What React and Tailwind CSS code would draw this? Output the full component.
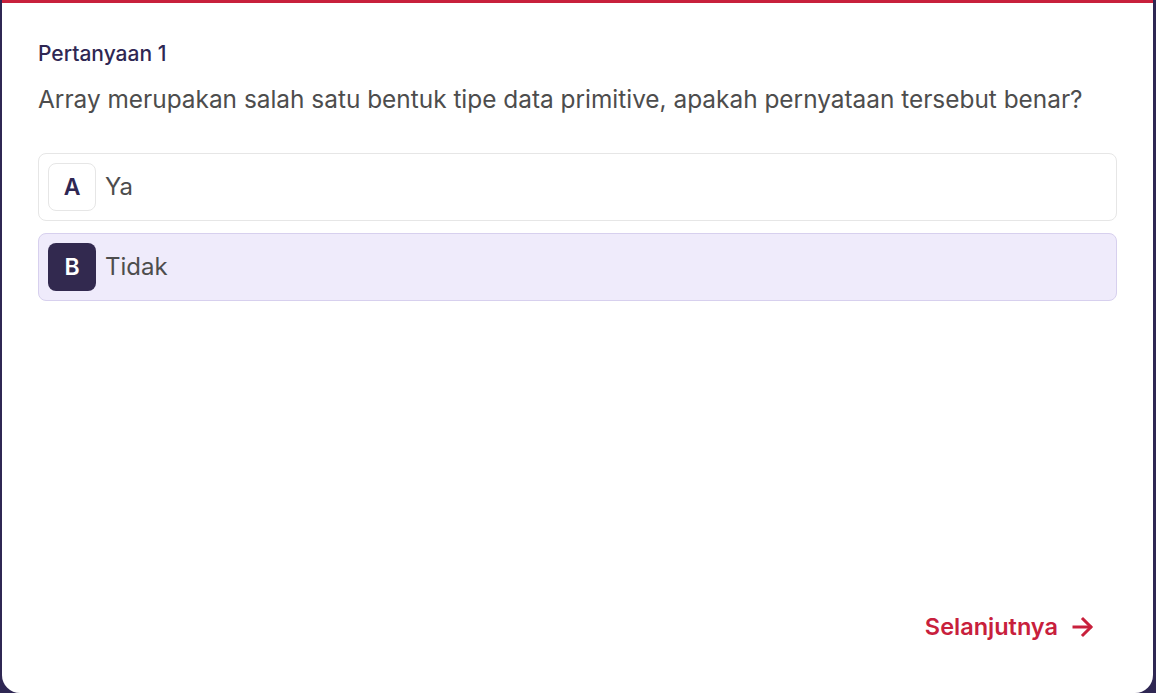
import { useState } from "react";

const options = [
  { key: "A", label: "Ya" },
  { key: "B", label: "Tidak" },
];

export default function App() {
  const [selected, setSelected] = useState("B");

  return (
    <div
      className="w-full h-[693px] bg-[#2f2753] pl-[2px] pr-[3px]"
      style={{ fontFamily: "Inter, 'Noto Sans', sans-serif" }}
    >
      <div className="h-full bg-white border-t-[3px] border-[#c8203c] rounded-b-[18px] flex flex-col px-9 pt-[37px] pb-[50px]">
        {/* Question */}
        <p className="text-[21px] leading-7 font-medium text-[#2f2753]">
          Pertanyaan 1
        </p>
        <p className="mt-[15px] text-[24.4px] leading-8 text-[#4d4d4d]">
          Array merupakan salah satu bentuk tipe data primitive, apakah pernyataan tersebut benar?
        </p>

        {/* Options */}
        <div className="mt-[38px] flex flex-col gap-[12px]">
          {options.map((opt) => {
            const active = selected === opt.key;
            return (
              <button
                key={opt.key}
                onClick={() => setSelected(opt.key)}
                className={`flex items-center gap-[9px] p-[9px] rounded-lg border text-left cursor-pointer ${
                  active
                    ? "bg-[#efebfb] border-[#d7d0ee]"
                    : "bg-white border-[#e6e6e6]"
                }`}
              >
                <span
                  className={`w-12 h-12 flex items-center justify-center rounded-lg text-[23px] font-semibold ${
                    active
                      ? "bg-[#32294f] text-white"
                      : "bg-white border border-[#e6e6e6] text-[#2f2753]"
                  }`}
                >
                  {opt.key}
                </span>
                <span className="text-[24px] leading-8 text-[#4d4d4d]">{opt.label}</span>
              </button>
            );
          })}
        </div>

        {/* Next */}
        <div className="mt-auto flex justify-end pr-[22px]">
          <button className="flex items-center gap-[13px] text-[#c8203c] text-[23.5px] leading-8 font-semibold cursor-pointer">
            Selanjutnya
            <svg width="24" height="24" viewBox="0 0 24 24" fill="none" stroke="currentColor" strokeWidth="3" strokeLinecap="square">
              <path d="M3 12h16" />
              <path d="M12 4l8 8-8 8" />
            </svg>
          </button>
        </div>
      </div>
    </div>
  );
}
